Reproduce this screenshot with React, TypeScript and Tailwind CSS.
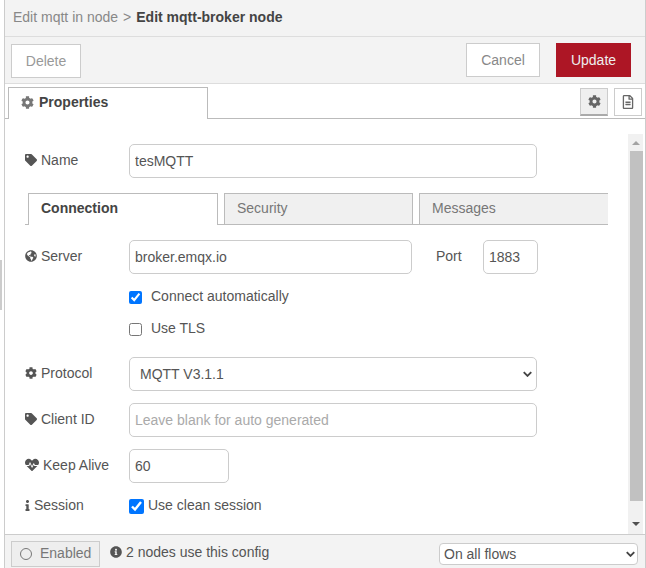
import type { ReactNode } from 'react'
import { FaCog, FaTag, FaGlobeAmericas, FaHeartbeat, FaInfo, FaInfoCircle, FaRegFileAlt } from 'react-icons/fa'

const inputClass =
  'h-[34px] rounded-[5px] border border-[#ccc] bg-white px-[5px] text-[14px] text-[#555] outline-none placeholder:text-[#aaa]'

function FieldLabel({ icon, children }: { icon: ReactNode; children: ReactNode }) {
  return (
    <label className="flex w-[104px] shrink-0 items-center gap-[4px] pb-[2px] text-[14px] text-[#555]">
      {icon}
      <span>{children}</span>
    </label>
  )
}

function Chevron({ className }: { className: string }) {
  return (
    <svg viewBox="0 0 12 8" className={className} fill="none" stroke="#444" strokeWidth="2.5">
      <path d="M1 1.5 6 6.5 11 1.5" />
    </svg>
  )
}

export default function App() {
  return (
    <div className="relative flex h-[568px] w-[646px] flex-col overflow-hidden border-r border-r-[#ccc] bg-white pl-[4px] font-['Liberation_Sans',Arial,sans-serif] text-[14px] text-[#555]">
      <div className="absolute left-0 top-[260px] h-[50px] w-[2px] bg-[#ccc]" />
      <div className="flex h-full flex-col border-l border-l-[#ccc]">
        {/* tray header */}
        <div className="flex h-[37px] shrink-0 items-center gap-[5px] border-b border-b-[#ddd] bg-[#f3f3f3] pl-[8px] pb-[1px]">
          <span className="text-[#888]">Edit mqtt in node</span>
          <span className="text-[#888]">&gt;</span>
          <span className="font-bold text-[#444]">Edit mqtt-broker node</span>
        </div>

        {/* toolbar */}
        <div className="flex h-[47px] shrink-0 items-start justify-between border-b border-b-[#ddd] bg-[#f3f3f3] pl-[6px] pr-[14px]">
          <button className="mt-[7px] h-[34px] w-[70px] border border-[#ccc] bg-white text-[#999]">Delete</button>
          <div className="mt-[6px] flex gap-[16px]">
            <button className="h-[34px] w-[74px] border border-[#ccc] bg-white text-[#888]">Cancel</button>
            <button className="h-[34px] w-[75px] bg-[#ad1625] text-[#eee]">Update</button>
          </div>
        </div>

        {/* tray tabs */}
        <div className="flex h-[35px] shrink-0 justify-between border-b border-b-[#bbb] pl-[3px] pr-[3px]">
          <div className="mt-[3px] flex h-[32px] w-[200px] items-center gap-[5px] border border-b-0 border-[#bbb] bg-white pb-[2px] pl-[12px] font-bold text-[#444]">
            <FaCog className="size-[13px] text-[#777]" />
            <span>Properties</span>
          </div>
          <div className="mt-[4px] flex gap-[6px]">
            <div className="flex h-[28px] w-[28px] items-center justify-center border border-[#ccc] border-b-2 border-b-[#aaa] bg-[#efefef]">
              <FaCog className="size-[13px] text-[#666]" />
            </div>
            <div className="flex h-[28px] w-[28px] items-center justify-center border border-[#ccc] bg-white">
              <FaRegFileAlt className="size-[14px] text-[#666]" />
            </div>
          </div>
        </div>

        {/* form body */}
        <div className="flex min-h-0 flex-1">
          <div className="w-[623px] shrink-0 pl-[20px] pt-[25px]">
            <div className="flex items-center">
              <FieldLabel icon={<FaTag className="size-[12px] text-[#555]" />}>Name</FieldLabel>
              <input className={`${inputClass} w-[408px]`} defaultValue="tesMQTT" />
            </div>

            <div className="mt-[15px] flex h-[32px] w-[583px] items-end gap-[6px] border-b border-b-[#bbb] pl-[3px]">
              <div className="-mb-px flex h-[32px] w-[190px] items-center border border-b-0 border-[#bbb] bg-white pb-[2px] pl-[12px] font-bold text-[#444]">
                Connection
              </div>
              <div className="flex h-[31px] w-[189px] items-center border border-b-0 border-[#bbb] bg-[#f0f0f0] pb-[2px] pl-[12px] text-[#777]">
                Security
              </div>
              <div className="flex h-[31px] w-[189px] items-center border-l border-t border-[#bbb] bg-[#f0f0f0] pb-[2px] pl-[12px] text-[#777]">
                Messages
              </div>
            </div>

            <div className="mt-[15px] flex items-center">
              <FieldLabel icon={<FaGlobeAmericas className="size-[12px] text-[#555]" />}>Server</FieldLabel>
              <input className={`${inputClass} w-[283px]`} defaultValue="broker.emqx.io" />
              <span className="ml-[24px] w-[47px] pb-[2px]">Port</span>
              <input className={`${inputClass} w-[55px]`} defaultValue="1883" />
            </div>

            <label className="ml-[104px] mt-[16px] flex h-[14px] items-center gap-[9px]">
              <input type="checkbox" defaultChecked className="m-0 size-[13px]" />
              <span className="pb-[2px]">Connect automatically</span>
            </label>
            <label className="ml-[104px] mt-[18px] flex h-[14px] items-center gap-[9px]">
              <input type="checkbox" className="m-0 size-[13px]" />
              <span className="pb-[2px]">Use TLS</span>
            </label>

            <div className="mt-[21px] flex items-center">
              <FieldLabel icon={<FaCog className="size-[12px] text-[#555]" />}>Protocol</FieldLabel>
              <div className="relative w-[408px]">
                <select className={`${inputClass} w-full appearance-none pl-[10px]`} defaultValue="v4">
                  <option value="v4">MQTT V3.1.1</option>
                </select>
                <Chevron className="pointer-events-none absolute right-[5px] top-[14px] w-[9px]" />
              </div>
            </div>

            <div className="mt-[12px] flex items-center">
              <FieldLabel icon={<FaTag className="size-[12px] text-[#555]" />}>Client ID</FieldLabel>
              <input className={`${inputClass} w-[408px]`} placeholder="Leave blank for auto generated" />
            </div>

            <div className="mt-[12px] flex items-center">
              <FieldLabel icon={<FaHeartbeat className="size-[14px] text-[#555]" />}>Keep Alive</FieldLabel>
              <input className={`${inputClass} w-[100px]`} defaultValue="60" />
            </div>

            <div className="mt-[12px] flex items-center">
              <FieldLabel icon={<FaInfo className="h-[11px] w-[5px] text-[#555]" />}>Session</FieldLabel>
              <label className="flex items-center gap-[4px]">
                <input type="checkbox" defaultChecked className="m-0 size-[15px]" />
                <span className="pb-[2px]">Use clean session</span>
              </label>
            </div>
          </div>

          {/* scrollbar */}
          <div className="mt-[15px] flex h-[400px] w-[15px] flex-col items-center bg-[#f1f1f1]">
            <div className="mt-[7px] h-0 w-0 border-x-[4px] border-b-[4px] border-x-transparent border-b-[#a3a3a3]" />
            <div className="ml-[2px] mt-[6px] h-[350px] w-[13px] bg-[#c1c1c1]" />
            <div className="mt-[21px] h-0 w-0 border-x-[4px] border-t-[4px] border-x-transparent border-t-[#505050]" />
          </div>
        </div>

        {/* footer */}
        <div className="flex h-[34px] shrink-0 items-center border-t border-t-[#ccc] bg-[#f3f3f3] pl-[6px] pr-[7px]">
          <button className="mt-[4px] flex h-[26px] w-[89px] items-center gap-[8px] border border-[#ccc] bg-[#eee] pl-[8px] text-[#777]">
            <span className="size-[12px] rounded-full border border-[#777]" />
            <span>Enabled</span>
          </button>
          <FaInfoCircle className="ml-[10px] size-[12px] text-[#555]" />
          <span className="ml-[4px] mt-[1px]">2 nodes use this config</span>
          <div className="relative ml-auto mt-[4px] w-[199px]">
            <select className="h-[22px] w-full appearance-none rounded-[4px] border border-[#ccc] bg-white pl-[4px] text-[14px] text-[#555] outline-none" defaultValue="all">
              <option value="all">On all flows</option>
            </select>
            <Chevron className="pointer-events-none absolute right-[3px] top-[8px] w-[9px]" />
          </div>
        </div>
      </div>
    </div>
  )
}
